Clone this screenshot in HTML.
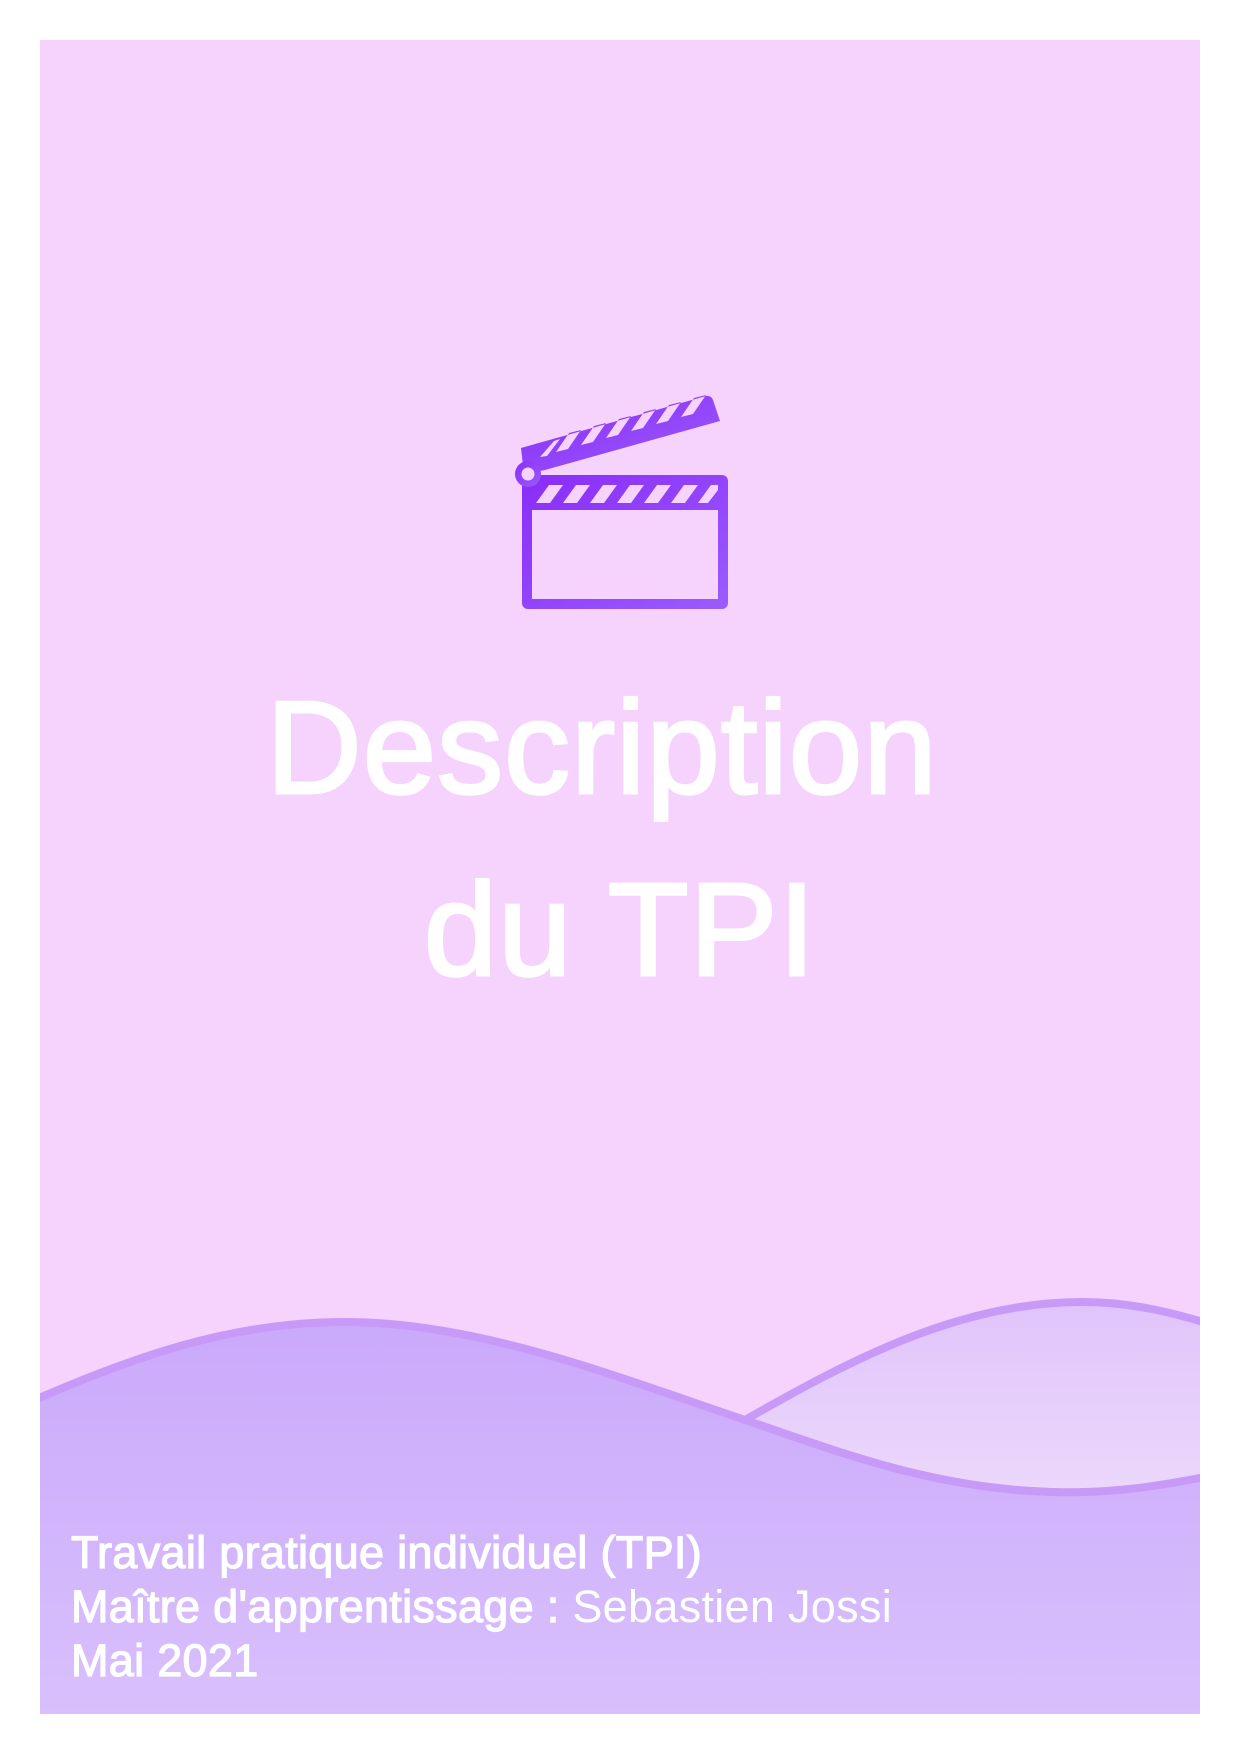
<!DOCTYPE html>
<html><head><meta charset="utf-8"><style>
html,body{margin:0;padding:0;background:#fff;}
body{width:1240px;height:1754px;position:relative;overflow:hidden;font-family:"Liberation Sans",sans-serif;}
#panel{position:absolute;left:40px;top:40px;width:1160px;height:1674px;background:#f5d3fd;overflow:hidden;}
.t{position:absolute;left:0;width:1240px;text-align:center;color:#fff;font-size:132px;line-height:1;letter-spacing:1px;-webkit-text-stroke:3px #fff;}
.s{position:absolute;left:71px;color:#fff;font-size:45px;line-height:1;white-space:nowrap;-webkit-text-stroke:1.2px #fff;letter-spacing:0.3px;}
.n{-webkit-text-stroke:0;}
</style></head><body>
<div id="panel"></div>
<svg width="1240" height="1754" style="position:absolute;left:0;top:0">
<defs>
<linearGradient id="ic" x1="0" y1="0" x2="1" y2="1"><stop offset="0" stop-color="#8a2cf8"/><stop offset="1" stop-color="#9a5cfc"/></linearGradient>
<linearGradient id="w1" x1="0" y1="0" x2="0" y2="1"><stop offset="0" stop-color="#caa9fb"/><stop offset="1" stop-color="#d9c0fc"/></linearGradient>
<linearGradient id="w2" x1="0" y1="0" x2="0" y2="1"><stop offset="0" stop-color="#e0c4fb"/><stop offset="1" stop-color="#ecd8fb"/></linearGradient>
<clipPath id="pc"><rect x="40" y="40" width="1160" height="1674"/></clipPath>
</defs>
<g clip-path="url(#pc)">
<path d="M745 1420 C850 1360 960 1302 1082 1302 C1130 1302 1170 1312 1210 1324 L1210 1480 C1160 1490 1100 1494 1050 1492 C930 1488 840 1452 745 1420 Z" fill="url(#w2)" stroke="#c89af8" stroke-width="8"/>
<path d="M30 1402 C130 1358 230 1322 345 1322 C480 1322 620 1378 745 1420 C840 1452 930 1488 1050 1492 C1110 1494 1160 1486 1210 1476 L1210 1720 L30 1720 Z" fill="url(#w1)" stroke="#c89af8" stroke-width="8"/>
</g>
<g fill="url(#ic)">
<path fill-rule="evenodd" d="M527 475 H722 a6 6 0 0 1 6 6 V603 a6 6 0 0 1 -6 6 H528 a6 6 0 0 1 -6 -6 V481 Z M532 510 V599 H718 V510 Z
M536 503 L549 485 H563 L550 503 Z M563 503 L576 485 H590 L577 503 Z M590 503 L603 485 H617 L604 503 Z M617 503 L630 485 H644 L631 503 Z M644 503 L657 485 H671 L658 503 Z M671 503 L684 485 H698 L685 503 Z M698 503 L711 485 H718 V490 L708 503 Z"/>
<path fill-rule="evenodd" d="M521 448 L706 396 a6 6 0 0 1 7 4 L720 421 L545 470 L524 474 Z
M540 457 L554 441 L560 439 L547 456 Z
M556 452 L569 433 L581 430 L568 449 Z M581 445 L594 426 L606 423 L593 442 Z M606 438 L619 419 L631 416 L618 435 Z M631 431 L644 412 L656 409 L643 428 Z M656 424 L669 405 L681 402 L668 421 Z M681 417 L694 398 L706 395 L693 414 Z"/>
<circle cx="528" cy="474" r="13"/>
<circle cx="528" cy="474" r="6.5" fill="#f5d3fd"/>
</g>
</svg>
<div class="t" style="top:682px;left:-18px">Description</div>
<div class="t" style="top:864px">du TPI</div>
<div class="s" style="top:1530px">Travail pratique individuel (TPI)</div>
<div class="s" style="top:1584px">Maître d'apprentissage : <span class="n">Sebastien Jossi</span></div>
<div class="s" style="top:1638px">Mai 2021</div>
</body></html>
